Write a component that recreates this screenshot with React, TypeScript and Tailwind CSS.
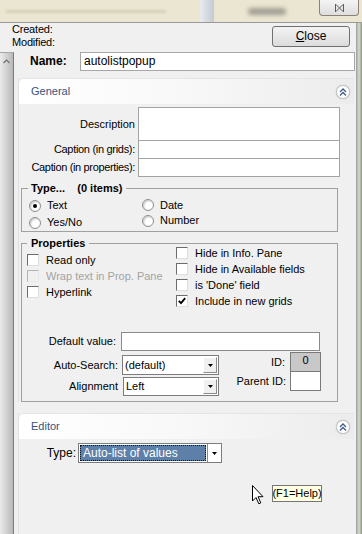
import React from "react";

function ChevronBtn() {
  return (
    <div className="flex h-[14px] w-[14px] items-center justify-center rounded-full border border-[#c8c8c8] bg-white shadow-[0_0_1px_#9a9a9a]">
      <svg width="8" height="8" viewBox="0 0 8 8" fill="none" stroke="#3d5c86" strokeWidth="1.3">
        <path d="M1 4 L4 1 L7 4" />
        <path d="M1 7.5 L4 4.5 L7 7.5" />
      </svg>
    </div>
  );
}

function PanelHeader({ title }: { title: string }) {
  return (
    <div className="flex h-[26px] items-center justify-between rounded-tl-[5px] border-t border-[#e4e4e4] bg-linear-to-r from-white via-[#f8f8f8] to-[#ececec] pl-[12px] pr-[4px]">
      <span className="text-[#3a527e]">{title}</span>
      <ChevronBtn />
    </div>
  );
}

function Radio({ label, checked }: { label: string; checked?: boolean }) {
  return (
    <div className="flex items-center">
      <span className="flex h-[12px] w-[12px] items-center justify-center rounded-full border border-[#8e8e8e] bg-white shadow-[inset_1px_1px_2px_#c4c4c4]">
        {checked && <span className="h-[4px] w-[4px] rounded-full bg-black" />}
      </span>
      <span className="ml-[6px]">{label}</span>
    </div>
  );
}

function Check({ label, checked, disabled }: { label: string; checked?: boolean; disabled?: boolean }) {
  return (
    <div className="flex h-[16px] items-center">
      {disabled ? (
        <span className="h-[12px] w-[12px] border border-t-[#b4b4b4] border-l-[#b4b4b4] border-r-[#e8e8e8] border-b-[#e8e8e8] bg-[#f0f0f0]" />
      ) : (
        <span className="flex h-[12px] w-[12px] items-center justify-center border border-t-[#6c6c6c] border-l-[#6c6c6c] border-r-[#dedede] border-b-[#dedede] bg-white">
          {checked && (
            <svg width="8" height="8" viewBox="0 0 8 8" fill="none" stroke="#000" strokeWidth="1.8">
              <path d="M0.8 3.8 L3 6.2 L7.2 1.2" />
            </svg>
          )}
        </span>
      )}
      <span className={disabled ? "ml-[7px] text-[#a3a3a3]" : "ml-[7px]"}>{label}</span>
    </div>
  );
}

function DropBtn() {
  return (
    <span className="my-[1px] mr-[1px] ml-auto flex w-[14px] items-center justify-center border border-t-white border-l-white border-r-[#8a8a8a] border-b-[#8a8a8a] bg-[#f0f0f0]">
      <svg width="5" height="3" viewBox="0 0 5 3">
        <path d="M0 0 H5 L2.5 3 Z" fill="#000" />
      </svg>
    </span>
  );
}

function Combo({ value, className }: { value: string; className: string }) {
  return (
    <div className={"flex border border-[#7c7c7c] bg-white " + className}>
      <span className="self-center pl-[2px]">{value}</span>
      <DropBtn />
    </div>
  );
}

export default function App() {
  return (
    <div className="relative flex h-[534px] w-[362px] flex-col overflow-hidden bg-[#f0f0f0] font-['Liberation_Sans',Arial,sans-serif] text-[11px] leading-[13px] text-black">
      {/* window behind, peeking over the top */}
      <div className="flex h-[23px] shrink-0 border-b border-[#9a9a9a] bg-[#ebe6d1]">
        <div className="flex w-[200px] flex-col justify-center gap-[4px] pl-[6px]">
          <div className="h-[3px] w-[160px] bg-[#d6d0b8] blur-[1px]" />
        </div>
        <div className="w-[14px] bg-linear-to-r from-[#e8ebee] to-[#c3cad1]" />
        <div className="flex flex-1 items-center pl-[34px]">
          <div className="h-[7px] w-[38px] rounded bg-[#a29e94] blur-[2px]" />
        </div>
        <div className="mr-[3px] flex h-[16px] w-[40px] items-center justify-center rounded-b-[4px] border border-t-0 border-[#8c817a] bg-linear-to-b from-[#f4f4f4] to-[#dedede]">
          <svg width="9" height="8" viewBox="0 0 9 8" fill="none" stroke="#5a5a5a" strokeWidth="1">
            <path d="M0.5 0 V8 M8.5 0 V8 M1 0.5 L8 7.5 M8 0.5 L1 7.5" />
          </svg>
        </div>
      </div>

      <div className="flex flex-1">
        <div className="flex flex-1 flex-col">
          {/* created / modified + close */}
          <div className="flex h-[29px] shrink-0 justify-between pl-[12px] pr-[6px]">
            <div className="flex flex-col tracking-[-0.2px]">
              <span>Created:</span>
              <span>Modified:</span>
            </div>
            <button className="mt-[3px] h-[21px] w-[78px] rounded-[3px] border border-[#707070] bg-linear-to-b from-[#f3f3f3] to-[#dcdcdc] text-[12px]">
              <span className="underline">C</span>lose
            </button>
          </div>

          <div className="flex flex-1">
            {/* left collapse strip */}
            <div className="flex w-[14px] shrink-0 justify-center border-t border-r border-t-[#a8a8a8] border-r-[#7b7b7b] bg-linear-to-r from-[#ebebeb] to-[#b8b8b8] pt-[6px]">
              <svg width="7" height="5" viewBox="0 0 7 5" fill="none" stroke="#707070" strokeWidth="1.2">
                <path d="M0.5 4 L3.5 1 L6.5 4" />
              </svg>
            </div>

            <div className="flex flex-1 flex-col">
              {/* name row */}
              <div className="flex h-[19px] items-center">
                <span className="ml-[16px] w-[50px] text-[12px] font-bold">Name:</span>
                <div className="mr-[1px] flex h-[19px] flex-1 items-center border border-[#a7a7a7] bg-white pl-[3px] text-[12px]">
                  autolistpopup
                </div>
              </div>

              {/* General panel */}
              <div className="mt-[7px] ml-[4px] mr-[2px] border-l border-[#e0e0e0]">
                <PanelHeader title="General" />

                <div className="mt-[3px] grid grid-cols-[116px_202px] gap-x-[3px]">
                  <span className="self-center text-right">Description</span>
                  <div className="h-[34px] border border-[#a3a3a3] bg-white" />
                  <span className="-mt-px self-center text-right tracking-[-0.3px]">Caption (in grids):</span>
                  <div className="-mt-px h-[19px] border border-[#a3a3a3] bg-white" />
                  <span className="-mt-px self-center text-right tracking-[-0.35px]">Caption (in properties):</span>
                  <div className="-mt-px h-[19px] border border-[#a3a3a3] bg-white" />
                </div>

                <fieldset className="mt-[5px] ml-[2px] w-[317px] border border-[#a0a0a0] px-[6px] pb-0">
                  <legend className="px-[3px] font-bold leading-[13px]">Type...&nbsp;&nbsp;&nbsp;&nbsp;(0 items)</legend>
                  <div className="mt-[2px] flex pl-[1px]">
                    <div className="flex w-[113px] flex-col">
                      <div className="flex h-[17px] items-center">
                        <Radio label="Text" checked />
                      </div>
                      <div className="flex h-[17px] items-center">
                        <Radio label="Yes/No" />
                      </div>
                    </div>
                    <div className="flex flex-col">
                      <div className="flex h-[16px] items-center">
                        <Radio label="Date" />
                      </div>
                      <div className="flex h-[15px] items-center">
                        <Radio label="Number" />
                      </div>
                    </div>
                  </div>
                </fieldset>

                <fieldset className="mt-[5px] ml-[2px] w-[317px] border border-[#a0a0a0] px-[5px] pb-[5px]">
                  <legend className="px-[4px] font-bold leading-[13px]">Properties</legend>
                  <div className="grid grid-cols-[149px_1fr] items-start">
                    <div className="mt-[2px] flex flex-col">
                      <Check label="Read only" />
                      <Check label="Wrap text in Prop. Pane" disabled />
                      <Check label="Hyperlink" />
                    </div>
                    <div className="-mt-[5px] flex flex-col">
                      <Check label="Hide in Info. Pane" />
                      <Check label="Hide in Available fields" />
                      <Check label="is 'Done' field" />
                      <Check label="Include in new grids" checked />
                    </div>
                  </div>

                  <div className="mt-[23px] flex items-center">
                    <span className="w-[89px] text-right">Default value:</span>
                    <div className="ml-[5px] h-[19px] w-[199px] border border-[#8a8a8a] bg-white" />
                  </div>

                  <div className="flex">
                    <div className="flex flex-col">
                      <div className="mt-[4px] flex items-center">
                        <span className="w-[91px] text-right">Auto-Search:</span>
                        <Combo value="(default)" className="ml-[4px] h-[20px] w-[97px]" />
                      </div>
                      <div className="mt-[2px] flex items-center">
                        <span className="w-[91px] text-right">Alignment</span>
                        <Combo value="Left" className="ml-[5px] h-[19px] w-[96px]" />
                      </div>
                    </div>
                    <div className="mt-[1px] mr-[11px] ml-auto flex flex-col">
                      <div className="flex items-center">
                        <span className="mr-[5px] w-[55px] text-right">ID:</span>
                        <div className="flex h-[20px] w-[31px] justify-center border border-[#7a7a7a] bg-[#c8c8c8] pt-[1px]">0</div>
                      </div>
                      <div className="-mt-px flex items-center">
                        <span className="mr-[4px] w-[56px] text-right">Parent ID:</span>
                        <div className="h-[20px] w-[31px] border border-[#7a7a7a] bg-white" />
                      </div>
                    </div>
                  </div>
                </fieldset>
              </div>

              {/* Editor panel */}
              <div className="mt-[11px] ml-[4px] mr-[2px] flex-1 border-l border-[#e0e0e0]">
                <PanelHeader title="Editor" />
                <div className="mt-[4px] flex items-center">
                  <span className="w-[57px] text-right text-[12px]">Type:</span>
                  <div className="ml-[2px] flex h-[20px] w-[144px] border border-[#7c7c7c] bg-white">
                    <span className="m-[1px] flex flex-1 items-center border border-dotted border-[#111] bg-[#5e80a8] pl-[2px] text-[12px] text-white">
                      Auto-list of values
                    </span>
                    <span className="flex w-[14px] items-center justify-center border-l border-[#8a8a8a] bg-white">
                      <svg width="5" height="3" viewBox="0 0 5 3">
                        <path d="M0 0 H5 L2.5 3 Z" fill="#000" />
                      </svg>
                    </span>
                  </div>
                </div>
              </div>
            </div>
          </div>
        </div>

        {/* edge of the window behind */}
        <div className="w-[6px] shrink-0 bg-linear-to-r from-[#9c9c9c] via-[#d6dece] to-[#8e9886]" />
      </div>

      {/* mouse pointer and its help tip */}
      <svg className="absolute top-[485px] left-[252px]" width="12" height="20" viewBox="0 0 12 20">
        <path d="M0.5 0.5 V16 L4 12.5 L6.8 18.8 L8.8 17.9 L6.1 11.7 H11 Z" fill="#fff" stroke="#000" strokeWidth="1" />
      </svg>
      <div className="absolute top-[485px] left-[272px] flex h-[17px] w-[50px] items-center justify-center border border-[#767676] bg-[#ffffe1]">
        (F1=Help)
      </div>
    </div>
  );
}
